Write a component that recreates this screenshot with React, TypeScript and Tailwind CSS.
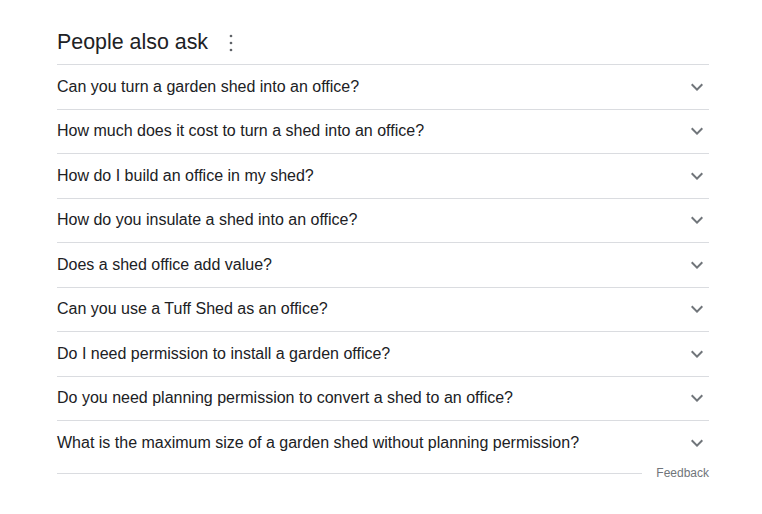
import React from "react";

const questions = [
  "Can you turn a garden shed into an office?",
  "How much does it cost to turn a shed into an office?",
  "How do I build an office in my shed?",
  "How do you insulate a shed into an office?",
  "Does a shed office add value?",
  "Can you use a Tuff Shed as an office?",
  "Do I need permission to install a garden office?",
  "Do you need planning permission to convert a shed to an office?",
  "What is the maximum size of a garden shed without planning permission?",
];

function Chevron() {
  return (
    <svg width="24" height="24" viewBox="0 0 24 24" fill="#70757a">
      <path d="M16.59 8.59L12 13.17 7.41 8.59 6 10l6 6 6-6z" />
    </svg>
  );
}

function Dots() {
  return (
    <svg width="8" height="20" viewBox="0 0 8 20" fill="#5f6368">
      <circle cx="4" cy="3" r="1.35" />
      <circle cx="4" cy="10" r="1.35" />
      <circle cx="4" cy="17" r="1.35" />
    </svg>
  );
}

export default function App() {
  return (
    <div className="min-h-[514px] bg-white pt-[21px] pl-[57px]" style={{ fontFamily: '"Liberation Sans", Arial, sans-serif' }}>
      <div className="w-[652px]">
        <div className="h-[44px] flex items-center border-b border-[#dadce0]">
          <span className="text-[21.4px] text-[#202124] leading-none">People also ask</span>
          <span className="ml-[19px] flex items-center"><Dots /></span>
        </div>
        {questions.map((q, i) => (
          <div
            key={i}
            className={`h-[44.5px] flex items-center justify-between ${i < questions.length - 1 ? "border-b border-[#dadce0]" : ""}`}
          >
            <span className="text-[16px] text-[#202124] leading-none">{q}</span>
            <Chevron />
          </div>
        ))}
        <div className="h-[15px] flex items-center">
          <div className="flex-1 border-t border-[#dadce0]" />
          <span className="ml-[14px] text-[12px] text-[#70757a] leading-none">Feedback</span>
        </div>
      </div>
    </div>
  );
}
